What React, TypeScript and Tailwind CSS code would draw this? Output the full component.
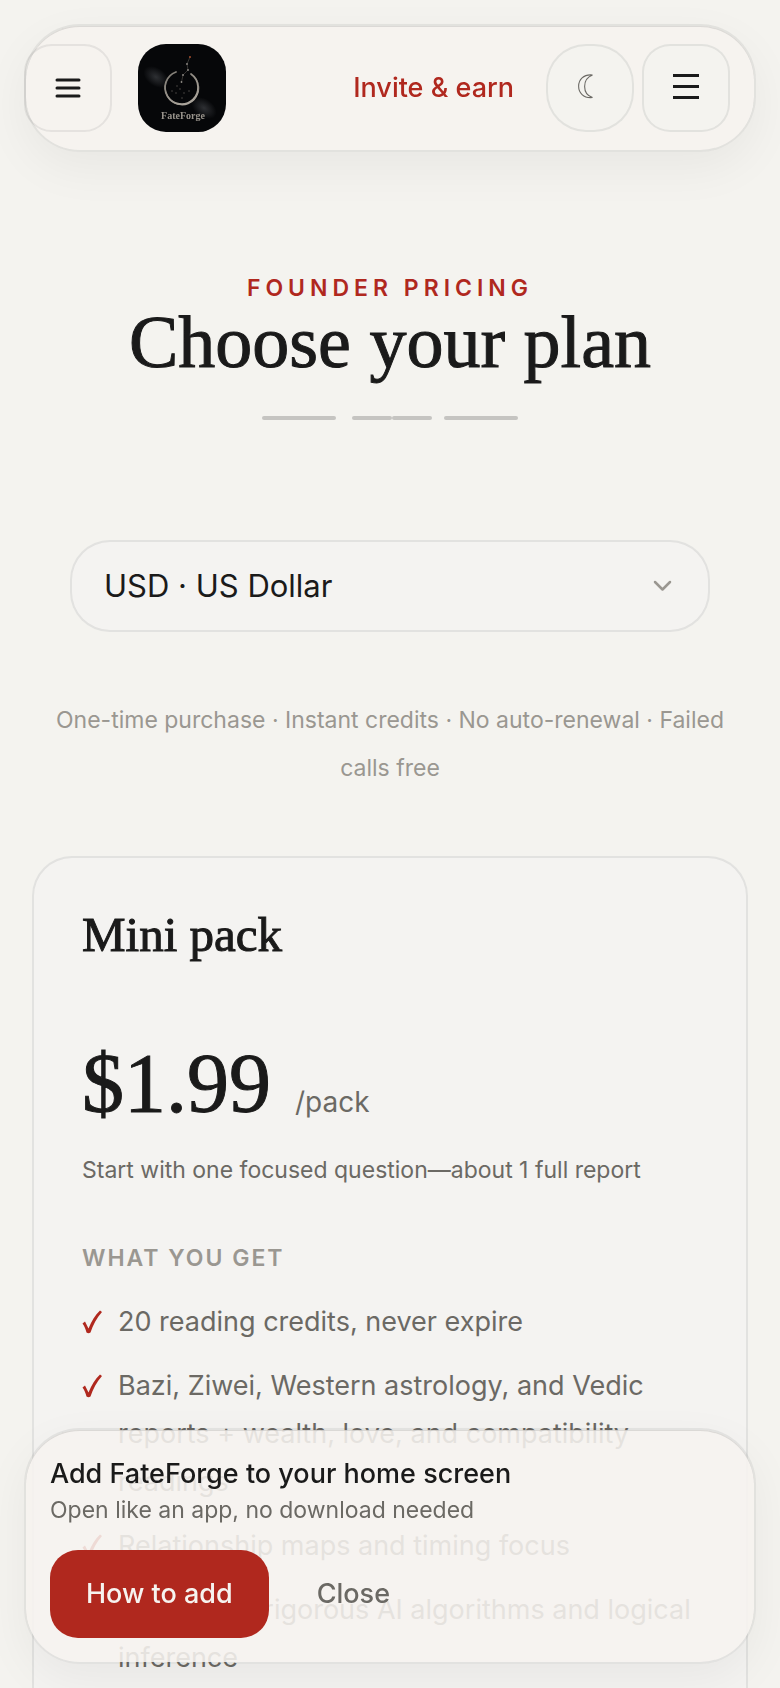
const features = [
  '20 reading credits, never expire',
  'Bazi, Ziwei, Western astrology, and Vedic reports + wealth, love, and compatibility readings',
  'Relationship maps and timing focus',
  'Verified by rigorous AI algorithms and logical inference',
];

const currencies = [
  { code: 'USD', label: 'USD · US Dollar' },
  { code: 'EUR', label: 'EUR · Euro' },
  { code: 'GBP', label: 'GBP · British Pound' },
];

function Logo() {
  return (
    <svg viewBox="0 0 88 88" className="size-22 rounded-[28px]" role="img" aria-label="FateForge">
      <defs>
        <radialGradient id="haze">
          <stop offset="0" stopColor="#8b8f96" stopOpacity="0.3" />
          <stop offset="1" stopColor="#8b8f96" stopOpacity="0" />
        </radialGradient>
        <linearGradient id="ring" x1="0" y1="0" x2="0.6" y2="1">
          <stop offset="0" stopColor="#7d7972" />
          <stop offset="1" stopColor="#aaa49b" />
        </linearGradient>
      </defs>
      <rect width="88" height="88" fill="#060709" />
      <ellipse cx="18" cy="33" rx="14" ry="9" fill="url(#haze)" transform="rotate(35 18 33)" />
      <ellipse cx="66" cy="64" rx="14" ry="9" fill="url(#haze)" transform="rotate(35 66 64)" />
      <path d="M37 28.5A16.5 16.5 0 1 0 53 29.5A17.2 17.2 0 1 1 37 28.5Z" fill="url(#ring)" />
      <path d="M38 28A16.5 16.5 0 1 0 53 30" fill="none" stroke="url(#ring)" strokeWidth="1.8" strokeLinecap="round" />
      <path d="M52 13L49 20L50 26L45 31L43.5 38" fill="none" stroke="#55524e" strokeWidth="0.6" />
      <circle cx="52" cy="13" r="0.9" fill="#b5522f" />
      <g fill="#8f8b85">
        <circle cx="49" cy="20" r="0.9" />
        <circle cx="50" cy="26" r="0.9" />
        <circle cx="45" cy="31" r="0.9" />
        <circle cx="43.5" cy="38" r="0.9" />
      </g>
      <g fill="#5b5854">
        <circle cx="39" cy="42" r="0.7" />
        <circle cx="42" cy="45" r="0.7" />
        <circle cx="34" cy="47" r="0.7" />
        <circle cx="38" cy="49" r="0.7" />
        <circle cx="46" cy="49" r="0.7" />
        <circle cx="51" cy="47" r="0.7" />
        <circle cx="44" cy="54" r="0.7" />
      </g>
      <text x="45" y="75" textAnchor="middle" fontSize="10" fontWeight="700" fill="#99948c" className="font-['Liberation_Serif',serif]">
        FateForge
      </text>
    </svg>
  );
}

function Check() {
  return (
    <svg viewBox="0 0 20 24" className="mt-3 h-6 w-5 shrink-0" aria-hidden="true">
      <path d="M0.5 13.5L3 11.5L6.5 18.5C9.5 11 13 5 18 0.5L20 2C14.5 8 11 15 8.5 22.5Q6.5 24 4.5 22.5C3.5 19 2.5 16 0.5 13.5Z" fill="#b0281e" />
    </svg>
  );
}

function Header() {
  return (
    <header className="fixed inset-x-6 top-6 z-10 flex items-center rounded-[56px] border-2 border-[#1a1a1a]/8 bg-[#f6f3ef]/88 bg-clip-padding py-[18px] pr-6 shadow-[0_16px_48px_rgba(26,26,26,0.05),inset_0_1px_0_rgba(26,26,26,0.12)]">
      <button aria-label="Open sidebar" className="-ml-0.5 flex size-22 items-center justify-center rounded-[28px] border-2 border-[#1a1a1a]/8">
        <svg viewBox="0 0 26 20" className="h-5 w-[26px]" fill="none" stroke="#1a1a1a" strokeWidth="3" strokeLinecap="round">
          <path d="M2 2H24M2 10H24M2 18H24" />
        </svg>
      </button>
      <a href="#" className="ml-[26px]">
        <Logo />
      </a>
      <a href="#" className="mr-8 ml-auto text-[27px] font-medium text-[#b0281e]">
        Invite &amp; earn
      </a>
      <div className="flex gap-2">
        <button aria-label="Dark mode" className="flex size-22 items-center justify-center rounded-[40px] border-2 border-[#1a1a1a]/8 bg-[#f4f3ef]">
          <svg viewBox="0 0 26 28" className="h-7 w-[26px]" fill="none" stroke="#6b6964" strokeWidth="1.1">
            <path d="M15.5 1C-3 -1 -3 25.5 15.5 23.5C5 20 5 5 15.5 1Z" />
          </svg>
        </button>
        <button aria-label="Open menu" className="flex size-22 items-center justify-center rounded-[28px] border-2 border-[#1a1a1a]/8 bg-[#f4f3ef]">
          <svg viewBox="0 0 26 28" className="h-7 w-[26px]" fill="#1a1a1a">
            <path d="M0 0H26V3H0ZM0 11H26V14H0ZM0 22H26V25H0Z" />
          </svg>
        </button>
      </div>
    </header>
  );
}

function InstallBanner() {
  return (
    <aside className="fixed inset-x-6 bottom-6 z-10 rounded-[56px] border-2 border-[#1a1a1a]/8 bg-[#f6f3ef]/88 bg-clip-padding p-6 shadow-[0_16px_48px_rgba(26,26,26,0.05),inset_0_1px_0_rgba(26,26,26,0.12)]">
      <p className="text-[27px] leading-10 font-medium text-[#1a1a1a]">Add FateForge to your home screen</p>
      <p className="text-[23px] leading-8 text-[#6b6964]">Open like an app, no download needed</p>
      <div className="mt-6 flex gap-3 text-[27px] font-medium">
        <button className="h-22 rounded-[28px] bg-[#b0281e] px-9 text-[#f6f3ef]">How to add</button>
        <button className="h-22 px-9 text-[#6b6964]">Close</button>
      </div>
    </aside>
  );
}

function PlanCard() {
  return (
    <section className="mt-16 rounded-[40px] border-2 border-[#1a1a1a]/8 bg-[#f4f3f1] px-12 pt-12 pb-32">
      <h2 className="font-['Liberation_Serif',serif] text-[49px] leading-[58px] font-medium text-[#1a1a1a] [-webkit-text-stroke:1px]">Mini pack</h2>
      <div className="mt-18 flex items-baseline gap-6">
        <span className="font-['Liberation_Serif',serif] text-[84px] leading-24 font-medium text-[#1a1a1a] [-webkit-text-stroke:1px]">$1.99</span>
        <span className="text-[28px]">/pack</span>
      </div>
      <p className="mt-4 text-[23px] leading-11">Start with one focused question—about 1 full report</p>
      <h3 className="mt-11 text-[23px] leading-11 font-semibold tracking-[2px] text-[#9a9791]">WHAT YOU GET</h3>
      <ul className="mt-[18px] space-y-4">
        {features.map((feature) => (
          <li key={feature} className="flex gap-4 text-[27px] leading-12">
            <Check />
            <span>{feature}</span>
          </li>
        ))}
      </ul>
    </section>
  );
}

export default function App() {
  return (
    <div className="h-screen overflow-y-auto bg-[#f4f3ef] font-[Inter,sans-serif] text-[#6b6964] [scrollbar-width:none]">
      <Header />
      <main className="px-8 pt-[268px]">
        <div className="text-center">
          <p className="text-[23px] leading-10 font-semibold tracking-[5px] text-[#b0281e]">FOUNDER PRICING</p>
          <h1 className="font-['Liberation_Serif',serif] text-[74px] leading-[68px] font-medium text-[#1a1a1a] [-webkit-text-stroke:1px]">Choose your plan</h1>
        </div>
        <div className="mt-10 flex justify-center" aria-hidden="true">
          <span className="h-1 w-[74px] rounded-full bg-[#c5c4c1]" />
          <span className="ml-4 h-1 w-10 rounded-full bg-[#c5c4c1]" />
          <span className="h-1 w-10 rounded-full bg-[#c5c4c1]" />
          <span className="ml-3 h-1 w-[74px] rounded-full bg-[#c5c4c1]" />
        </div>
        <div className="relative mx-auto mt-30 max-w-[640px]">
          <select aria-label="Currency" className="h-[92px] w-full appearance-none rounded-[40px] border-2 border-[#1a1a1a]/8 bg-[#f4f3f1] px-8 text-[31px] text-[#1a1a1a]">
            {currencies.map((currency) => (
              <option key={currency.code}>{currency.label}</option>
            ))}
          </select>
          <svg viewBox="0 0 24 24" className="pointer-events-none absolute top-[34px] right-9 size-6" fill="none" stroke="#9a9791" strokeWidth="2.5" strokeLinecap="round" strokeLinejoin="round">
            <path d="M5 8L12.5 15.5L20 8" />
          </svg>
        </div>
        <p className="mt-16 text-center text-[23px] leading-12 text-[#9a9791]">
          One-time purchase · Instant credits · No auto-renewal · Failed calls free
        </p>
        <PlanCard />
      </main>
      <InstallBanner />
    </div>
  );
}
